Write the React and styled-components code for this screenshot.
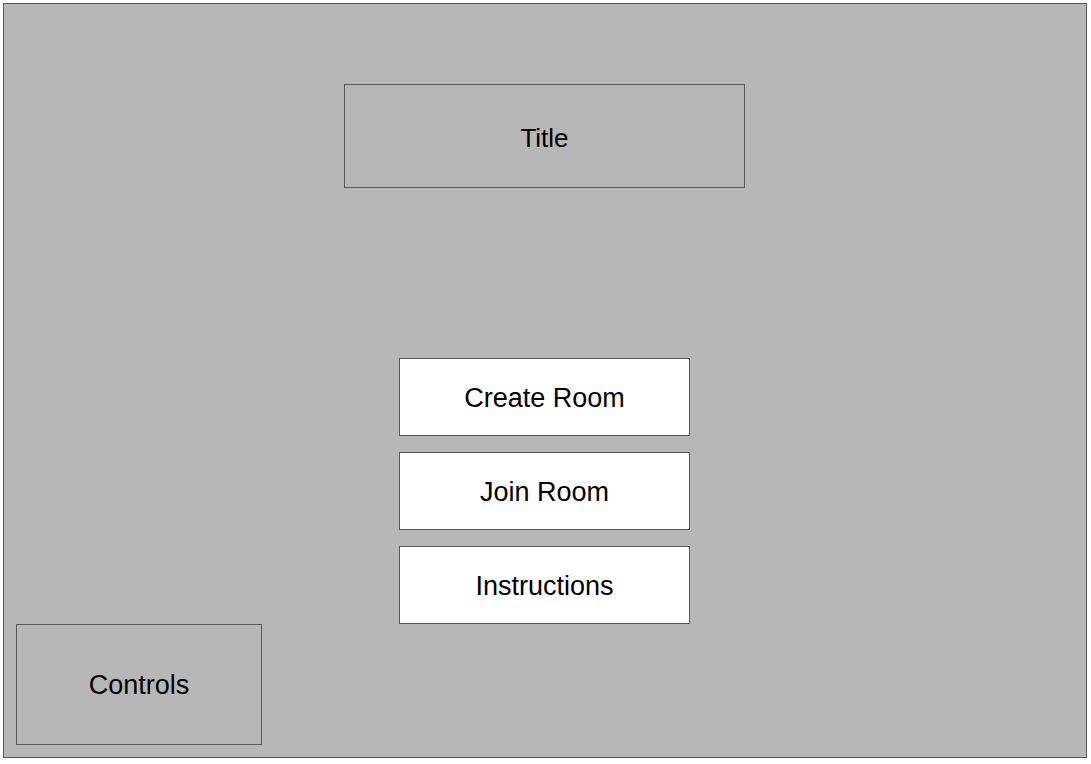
import React from 'react';
import styled, { createGlobalStyle } from 'styled-components';

const GlobalStyle = createGlobalStyle`
  html, body {
    margin: 0;
    padding: 0;
    background: #ffffff;
  }
  #root {
    padding: 3px;
  }
`;

const Screen = styled.div`
  box-sizing: border-box;
  width: 1084px;
  height: 755px;
  border: 1px solid #595959;
  background-color: #b7b7b7;
  display: flex;
  flex-direction: column;
  align-items: center;
  padding: 80px 13px 12px 12px;
  font-family: "Liberation Sans", Arial, sans-serif;
  color: #000;
`;

const TitleBox = styled.div`
  box-sizing: border-box;
  width: 401px;
  height: 105px;
  border: 1px solid #595959;
  display: flex;
  align-items: center;
  justify-content: center;
  padding-top: 4px;
  font-size: 26px;
`;

const Menu = styled.div`
  display: flex;
  flex-direction: column;
  gap: 16px;
  margin-top: 170px;
`;

const MenuButton = styled.button`
  box-sizing: border-box;
  width: 291px;
  height: 78px;
  border: 1px solid #595959;
  border-radius: 0;
  background-color: #ffffff;
  font-family: "Liberation Sans", Arial, sans-serif;
  font-size: 27px;
  color: #000;
  padding: 3px 0 0 0;
  cursor: pointer;
`;

const Footer = styled.div`
  align-self: stretch;
  display: flex;
  justify-content: flex-start;
  margin-top: auto;
`;

const ControlsBox = styled.div`
  box-sizing: border-box;
  width: 246px;
  height: 121px;
  border: 1px solid #595959;
  display: flex;
  align-items: center;
  justify-content: center;
  padding-top: 2px;
  font-size: 27px;
`;

export default function App() {
  const items = ['Create Room', 'Join Room', 'Instructions'];
  return (
    <>
      <GlobalStyle />
      <Screen>
        <TitleBox>Title</TitleBox>
        <Menu>
          {items.map((label) => (
            <MenuButton key={label}>{label}</MenuButton>
          ))}
        </Menu>
        <Footer>
          <ControlsBox>Controls</ControlsBox>
        </Footer>
      </Screen>
    </>
  );
}
